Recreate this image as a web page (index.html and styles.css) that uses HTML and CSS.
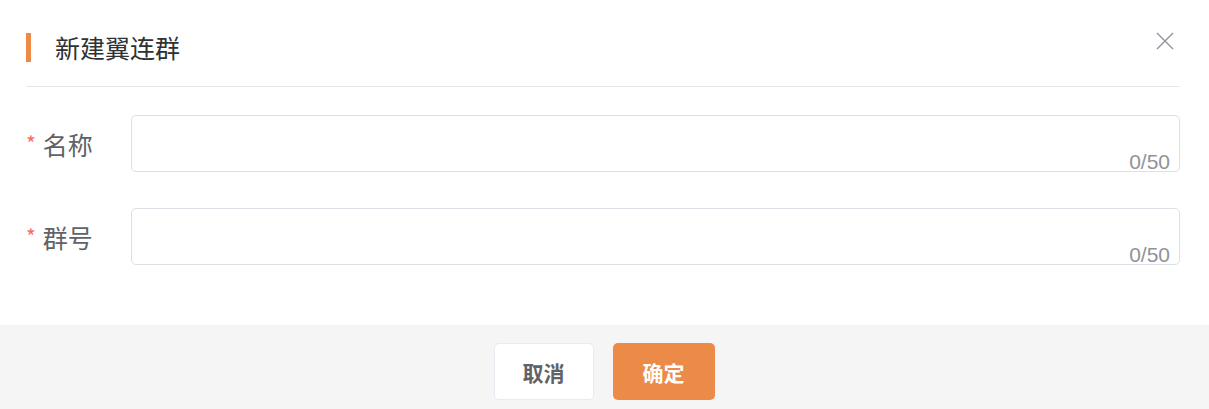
FILE: index.html
```html
<!DOCTYPE html>
<html lang="zh-CN">
<head>
    <meta charset="UTF-8">
    <title>新建翼连群</title>
    <link rel="stylesheet" href="styles.css">
</head>
<body>
    <div class="dialog">
        <div class="dialog-header">
            <span class="title-bar"></span>
            <span class="dialog-title">新建翼连群</span>
            <button class="close-btn" aria-label="关闭">
                <svg width="18" height="18" viewBox="0 0 18 18">
                    <path d="M1 1 L17 17 M17 1 L1 17" stroke="#909399" stroke-width="1.4" fill="none"/>
                </svg>
            </button>
        </div>

        <form class="dialog-body">
            <div class="form-row">
                <label class="form-label"><span class="required">*</span>名称</label>
                <div class="input-wrap">
                    <input class="form-input" type="text">
                    <span class="counter">0/50</span>
                </div>
            </div>
            <div class="form-row">
                <label class="form-label"><span class="required">*</span>群号</label>
                <div class="input-wrap">
                    <input class="form-input" type="text">
                    <span class="counter">0/50</span>
                </div>
            </div>
        </form>

        <div class="dialog-footer">
            <button class="btn btn-cancel">取消</button>
            <button class="btn btn-primary">确定</button>
        </div>
    </div>
</body>
</html>
```

FILE: styles.css
```css
/* Base */
:root {
    --primary-color: #ec8a48;
    --text-main: #303133;
    --text-regular: #606266;
    --text-muted: #909399;
    --border-color: #dcdfe6;
    --footer-bg: #f5f5f5;
}

html, body {
    margin: 0;
    padding: 0;
    background: #fff;
    font-family: "Noto Sans CJK SC", "Liberation Sans", sans-serif;
}

.dialog {
    width: 1209px;
    height: 409px;
    display: flex;
    flex-direction: column;
    overflow: hidden;
}

/* Header */
.dialog-header {
    display: flex;
    align-items: center;
    margin: 0 29px 0 26px;
    padding: 33px 0 24px;
    border-bottom: 1px solid #e4e7ed;
}

.title-bar {
    width: 5px;
    height: 29px;
    background: var(--primary-color);
}

.dialog-title {
    margin-left: 24px;
    font-size: 25px;
    line-height: 29px;
    color: var(--text-main);
}

.close-btn {
    align-self: flex-start;
    margin: -1px 6px 0 auto;
    padding: 0;
    border: none;
    background: none;
    display: flex;
    cursor: pointer;
}

/* Form */
.dialog-body {
    margin: 0;
    padding: 28px 29px 0 26px;
    display: flex;
    flex-direction: column;
    gap: 36px;
}

.form-row {
    display: flex;
    align-items: center;
}

.form-label {
    width: 105px;
    flex-shrink: 0;
    font-size: 25px;
    color: var(--text-regular);
}

.required {
    color: #f56c6c;
    font-size: 21px;
    margin-right: 7px;
    vertical-align: 3px;
}

.input-wrap {
    flex: 1;
    position: relative;
}

.form-input {
    display: block;
    box-sizing: border-box;
    width: 100%;
    height: 57px;
    border: 1.5px solid var(--border-color);
    border-radius: 5px;
    outline: none;
    background: #fff;
}

.counter {
    position: absolute;
    right: 10px;
    bottom: 0;
    font-family: "Liberation Sans", sans-serif;
    font-size: 21px;
    line-height: 21px;
    color: var(--text-muted);
}

/* Footer */
.dialog-footer {
    margin-top: auto;
    height: 84px;
    box-sizing: border-box;
    padding: 18px 1px 0 0;
    background: var(--footer-bg);
    display: flex;
    justify-content: center;
    align-items: flex-start;
    gap: 19px;
}

.btn {
    height: 57px;
    padding: 0;
    border-radius: 5px;
    font-family: inherit;
    font-size: 21px;
    font-weight: bold;
    cursor: pointer;
}

.btn-cancel {
    width: 100px;
    background: #fff;
    border: 1.5px solid #e8ebf2;
    color: var(--text-regular);
}

.btn-primary {
    width: 102px;
    background: var(--primary-color);
    border: none;
    color: #fff;
}
```
